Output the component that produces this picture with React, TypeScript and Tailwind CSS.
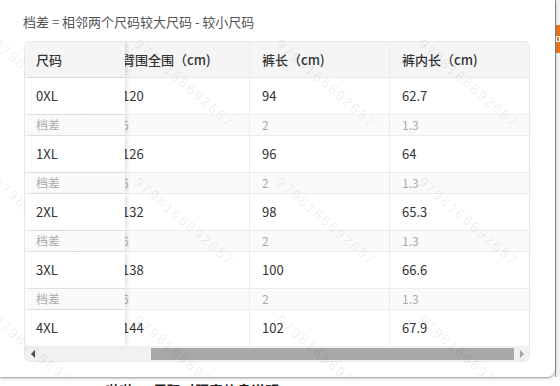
const rows = [
  { size: "0XL", arm: "120", len: "94", inner: "62.7" },
  { size: "1XL", arm: "126", len: "96", inner: "64" },
  { size: "2XL", arm: "132", len: "98", inner: "65.3" },
  { size: "3XL", arm: "138", len: "100", inner: "66.6" },
  { size: "4XL", arm: "144", len: "102", inner: "67.9" },
];

const diff = { arm: "6", len: "2", inner: "1.3" };

const marksX = [2, 143, 285, 427];
const marksY = [34, 172, 310];

const font = { fontFamily: '"Noto Sans CJK SC", "Noto Sans", sans-serif' };

const Row = ({ first, cells, kind }: { first: string; cells: string[]; kind: "head" | "main" | "diff" | "last" }) => {
  const h =
    kind === "head"
      ? "h-[36px] bg-[#f5f5f5] border-b border-[#e8e8e8] text-[13px] font-medium text-[#333]"
      : kind === "diff"
      ? "h-[21px] bg-[#fafafa] border-b border-[#ececec] text-[12px] text-[#aaa]"
      : kind === "last"
      ? "h-[36px] bg-white text-[13px] text-[#333]"
      : "h-[37px] bg-white border-b border-[#ececec] text-[13px] text-[#333]";
  const firstBg = kind === "head" ? "bg-[#f5f5f5]" : kind === "diff" ? "bg-[#fafafa]" : "bg-white";
  return (
    <div className={`flex ${h}`}>
      <div
        className={`relative z-10 w-[100px] shrink-0 flex items-center pl-[11px] ${firstBg} shadow-[3px_0_4px_-1px_rgba(0,0,0,0.13)]`}
      >
        {first}
      </div>
      <div className="flex-1 overflow-hidden">
        <div className="flex h-full -ml-[15px]">
          {cells.map((c, i) => (
            <div
              key={i}
              className={`w-[140px] shrink-0 h-full flex items-center pl-[12px] ${
                i < 2 ? "border-r border-[#ececec]" : ""
              }`}
            >
              {c}
            </div>
          ))}
        </div>
      </div>
    </div>
  );
};

const App = () => {
  return (
    <div className="relative w-[560px] h-[386px] overflow-hidden bg-white" style={font}>
      <div className="flex h-[377px]">
        <div className="relative z-20 w-[555px] h-full bg-white rounded-br-[8px] shadow-[0_1px_3px_rgba(0,0,0,0.45)]">
          <div className="pt-[12px] pl-[23px] h-[41px] text-[13px] leading-[20px] text-[#555]">
            档差 = 相邻两个尺码较大尺码 - 较小尺码
          </div>
          <div className="ml-[24px] w-[506px] border border-[#e8e8e8] rounded-[6px] overflow-hidden">
            <Row kind="head" first="尺码" cells={["臂围全围（cm)", "裤长（cm)", "裤内长（cm)"]} />
            {rows.map((r, i) => (
              <div key={r.size}>
                <Row kind={i === rows.length - 1 ? "last" : "main"} first={r.size} cells={[r.arm, r.len, r.inner]} />
                {i < rows.length - 1 && <Row kind="diff" first="档差" cells={[diff.arm, diff.len, diff.inner]} />}
              </div>
            ))}
            <div className="flex h-[15px] bg-[#f1f1f1]">
              <div className="w-[15px] flex items-center justify-center">
                <div className="w-0 h-0 border-y-[4px] border-y-transparent border-r-[4px] border-r-[#505050]" />
              </div>
              <div className="flex-1 pl-[111px] pt-[2px]">
                <div className="h-[12px] w-full bg-[#a8a8a8]" />
              </div>
              <div className="w-[15px] flex items-center justify-center">
                <div className="w-0 h-0 border-y-[4px] border-y-transparent border-l-[4px] border-l-[#a3a3a3]" />
              </div>
            </div>
          </div>
          <div className="pointer-events-none absolute inset-0 overflow-hidden">
            {marksY.map((y) =>
              marksX.map((x) => (
                <span
                  key={`${x}-${y}`}
                  className="absolute origin-top-left rotate-[41deg] text-[14px] tracking-[2px] text-[rgba(0,0,0,0.08)] whitespace-nowrap"
                  style={{ left: x, top: y, fontFamily: '"Liberation Sans", sans-serif' }}
                >
                  9798166692657
                </span>
              ))
            )}
          </div>
        </div>
        <div className="flex-1 bg-[#f2f2f2] border-l border-[#9a9a9a] pt-[25px]">
          <div className="h-[28px] bg-[#e8731c] flex items-center">
            <div className="w-[4px] h-[6px] border border-white" />
          </div>
        </div>
      </div>
      <div className="flex gap-[20px] pl-[105px] pt-[5px] text-[14px] leading-[16px] font-bold text-[#222]">
        <span>啦啦</span>
        <span>尺码对照表信息说明</span>
      </div>
    </div>
  );
};

export default App;
